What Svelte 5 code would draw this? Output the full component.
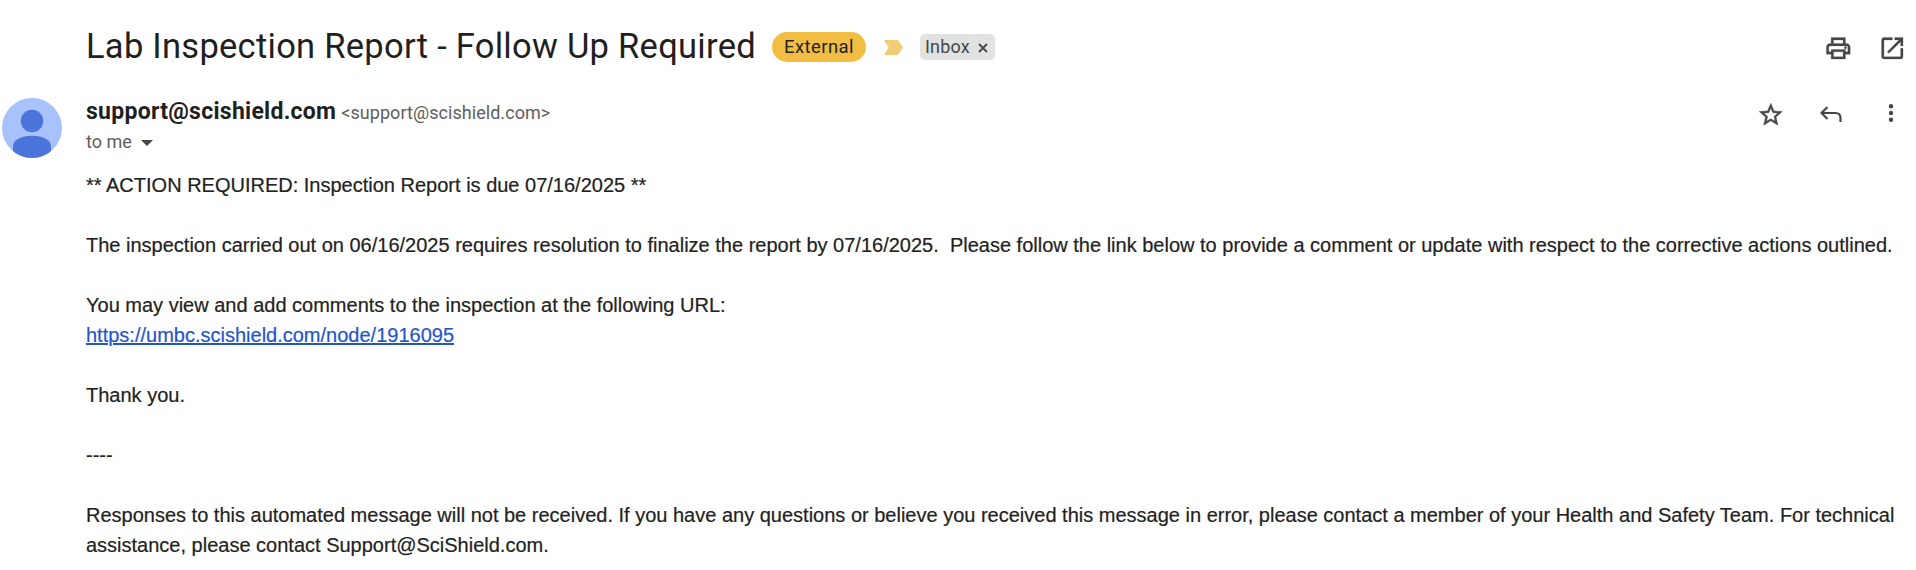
<script lang="ts">
    const subject = 'Lab Inspection Report - Follow Up Required'
    const sender = 'support@scishield.com'
    const reportUrl = 'https://umbc.scishield.com/node/1916095'
</script>

<main>
    <header class="subject-row">
        <h1>{subject}</h1>
        <span class="external">External</span>
        <svg class="marker" viewBox="0 0 19 15" aria-hidden="true">
            <path d="M0 0h13q1 0 1.600.8L19 7.500l-4.400 6.700q-.6.8-1.600.8H0l4.700-7.500z" />
        </svg>
        <span class="label">
            <span>Inbox</span>
            <svg viewBox="0 0 10 10" aria-hidden="true"><path d="M1 1l8 8M9 1l-8 8" /></svg>
        </span>
        <div class="subject-actions">
            <svg class="icon" viewBox="0 0 24 24" aria-label="Print">
                <path d="M19 8h-1V3H6v5H5c-1.660 0-3 1.340-3 3v6h4v4h12v-4h4v-6c0-1.660-1.340-3-3-3zM8 5h8v3H8V5zm8 14H8v-4h8v4zm2-4v-2H6v2H4v-4c0-.55.45-1 1-1h14c.55 0 1 .45 1 1v4h-2z" />
                <circle cx="18" cy="11.500" r="1" />
            </svg>
            <svg class="icon" viewBox="0 0 24 24" aria-label="Open in new window">
                <path d="M19 19H5V5h7V3H5a2 2 0 0 0-2 2v14a2 2 0 0 0 2 2h14c1.100 0 2-.9 2-2v-7h-2v7zM14 3v2h3.590l-9.830 9.830 1.410 1.410L19 6.410V10h2V3h-7z" />
            </svg>
        </div>
    </header>

    <section class="message">
        <svg class="avatar" viewBox="0 0 60 60" aria-hidden="true">
            <clipPath id="disc"><circle cx="30" cy="30" r="30" /></clipPath>
            <g clip-path="url(#disc)">
                <rect width="60" height="60" fill="#a8c3fb" />
                <circle cx="30" cy="23" r="11.200" fill="#4c75dc" />
                <path d="M11 60V48c0-6 8-10.300 19-10.300S49 42 49 48v12z" fill="#4c75dc" />
            </g>
        </svg>

        <div class="content">
            <div class="message-head">
                <div>
                    <div class="from">
                        <strong>{sender}</strong>
                        <span class="address">&lt;{sender}&gt;</span>
                    </div>
                    <div class="to">
                        <span>to me</span>
                        <svg viewBox="0 0 12 6" aria-hidden="true"><path d="M0 0h12L6 6z" /></svg>
                    </div>
                </div>
                <div class="message-actions">
                    <svg class="star" viewBox="0 0 24 24" aria-label="Star">
                        <path d="M22 9.240l-7.190-.62L12 2 9.190 8.630 2 9.240l5.460 4.730L5.820 21 12 17.270 18.180 21l-1.630-7.030L22 9.240zM12 15.400l-3.760 2.270 1-4.280-3.320-2.880 4.380-.38L12 6.100l1.710 4.040 4.380.38-3.320 2.880 1 4.280L12 15.400z" />
                    </svg>
                    <svg class="reply" viewBox="0 0 22 16" aria-label="Reply">
                        <path d="M7.500 1L1.500 7l6 6M1.500 7h14q5 0 5 5v4" />
                    </svg>
                    <svg class="more" viewBox="0 0 6 20" aria-label="More">
                        <circle cx="3" cy="3.300" r="2.200" />
                        <circle cx="3" cy="10" r="2.200" />
                        <circle cx="3" cy="16.700" r="2.200" />
                    </svg>
                </div>
            </div>

            <div class="body">
                <p>** ACTION REQUIRED: Inspection Report is due 07/16/2025 **</p>
                <p>
                    The inspection carried out on 06/16/2025 requires resolution to finalize the report by 07/16/2025.&nbsp; Please follow the link below to provide a comment or update with respect to the corrective actions outlined.
                </p>
                <p>
                    You may view and add comments to the inspection at the following URL:<br />
                    <a href={reportUrl}>{reportUrl}</a>
                </p>
                <p>Thank you.</p>
                <p>----</p>
                <p>
                    Responses to this automated message will not be received. If you have any questions or believe you received this message in error, please contact a member of your Health and Safety Team. For technical<br />
                    assistance, please contact Support@SciShield.com.
                </p>
            </div>
        </div>
    </section>
</main>

<style>
    :global(body) {
        background: #fff;
    }

    * {
        box-sizing: border-box;
        margin: 0;
    }

    main {
        width: 1916px;
        height: 570px;
        overflow: hidden;
        font-family: Roboto, 'Open Sans', sans-serif;
        color: #1f1f1f;
    }

    .subject-row {
        display: flex;
        align-items: center;
        height: 94px;
        padding: 0 9px 0 86px;
    }

    .subject-row > * {
        flex: none;
    }

    h1 {
        width: 676px;
        margin-right: 10px;
        padding-bottom: 2px;
        font-size: 34.5px;
        font-weight: 400;
        letter-spacing: 0.27px;
        white-space: nowrap;
    }

    .external {
        width: 94px;
        height: 30px;
        border-radius: 15px;
        background: #f1bd42;
        font-size: 18.5px;
        letter-spacing: 0.4px;
        line-height: 30px;
        text-align: center;
    }

    .marker {
        width: 19px;
        height: 15px;
        margin: 0 17px 0 18px;
        fill: #f1cc76;
    }

    .label {
        display: flex;
        align-items: center;
        justify-content: space-between;
        width: 75px;
        height: 26px;
        padding: 0 7px 0 5px;
        border-radius: 5px;
        background: #e1e3e1;
        color: #444746;
        font-size: 18px;
        letter-spacing: 0.2px;
    }

    .label span {
        padding-bottom: 2px;
    }

    .label svg {
        width: 10px;
        height: 10px;
        margin-top: 2px;
        stroke: #444746;
        stroke-width: 1.8;
    }

    .subject-actions {
        display: flex;
        gap: 25.400px;
        margin-left: auto;
        padding-top: 2px;
    }

    .icon {
        width: 28.600px;
        height: 28.600px;
        fill: #444746;
        stroke: #444746;
        stroke-width: 0.2;
    }

    .message {
        display: flex;
        padding: 4px 0 0 2px;
    }

    .avatar {
        width: 60px;
        height: 60px;
        margin-right: 24px;
    }

    .content {
        flex: 1;
    }

    .message-head {
        display: flex;
        justify-content: space-between;
        height: 72px;
    }

    .from {
        display: flex;
        align-items: baseline;
        gap: 5px;
        height: 30px;
        line-height: 28px;
    }

    strong {
        font-size: 23px;
        font-weight: 700;
        letter-spacing: 0.27px;
    }

    .address,
    .to {
        color: #5e5e5e;
        font-size: 18px;
    }

    .address {
        letter-spacing: 0.05px;
    }

    .to {
        display: flex;
        align-items: center;
        gap: 9px;
        height: 27px;
    }

    .to svg {
        width: 12px;
        height: 6px;
        margin-top: 3px;
        fill: #444746;
    }

    .message-actions {
        display: flex;
        align-items: center;
        height: 32px;
        padding-right: 22px;
    }

    .star {
        width: 27.600px;
        height: 27.600px;
        margin-top: 1px;
        margin-right: 35px;
        fill: #444746;
        stroke: #444746;
        stroke-width: 0.4;
    }

    .reply {
        width: 22px;
        height: 16px;
        margin-right: 46px;
        fill: none;
        stroke: #444746;
        stroke-width: 2.200;
    }

    .more {
        width: 6px;
        height: 20px;
        margin-bottom: 2px;
        fill: #444746;
    }

    .body {
        font-family: 'Liberation Sans', Arial, sans-serif;
        font-size: 20px;
        line-height: 30px;
        color: #222;
        white-space: nowrap;
        -webkit-text-stroke: 0.2px;
    }

    p {
        margin-bottom: 30px;
    }

    a {
        color: #1f55cc;
    }
</style>
